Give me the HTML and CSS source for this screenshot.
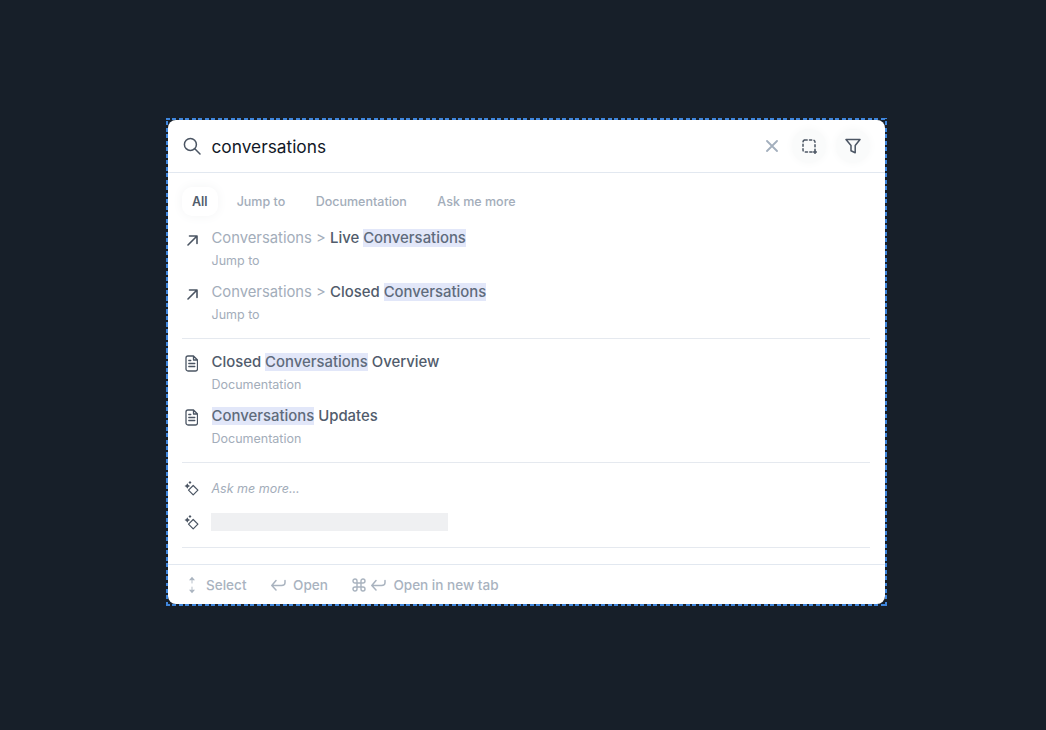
FILE: index.html
```html
<!DOCTYPE html>
<html lang="en">
<head>
<meta charset="utf-8">
<title>Search</title>
<link rel="stylesheet" href="styles.css">
</head>
<body>
<div class="frame">
<main class="panel">
  <header class="search">
    <svg class="ic-search" viewBox="0 0 18 18"><circle cx="7.4" cy="7.4" r="6"/><path d="M11.8 11.8 17 17"/></svg>
    <span class="query">conversations</span>
    <svg class="ic-clear" viewBox="0 0 12 12"><path d="M1 1 11 11M11 1 1 11"/></svg>
    <span class="round"><svg class="ic-btn" viewBox="0 0 16 16"><path class="dash" d="M4 2h8a2 2 0 0 1 2 2v8M11 14H4a2 2 0 0 1-2-2V4a2 2 0 0 1 2-2"/><path d="M14 12.500v3M12.500 14h3"/></svg></span>
    <span class="round"><svg class="ic-btn ic-filter" viewBox="0 0 16 16"><path d="M1 1.500h14l-4.800 6v7.300l-4.200-2v-5.300z"/></svg></span>
  </header>

  <nav class="tabs">
    <span class="tab active">All</span>
    <span class="tab">Jump to</span>
    <span class="tab">Documentation</span>
    <span class="tab">Ask me more</span>
  </nav>

  <section class="group first">
    <div class="item">
      <svg class="ic-item" viewBox="0 0 11 11"><path d="M1 10 10 1M2.500 1H10V8.500"/></svg>
      <div><p class="title"><span class="crumb">Conversations &gt; </span>Live <mark>Conversations</mark></p><p class="sub">Jump to</p></div>
    </div>
    <div class="item">
      <svg class="ic-item" viewBox="0 0 11 11"><path d="M1 10 10 1M2.500 1H10V8.500"/></svg>
      <div><p class="title"><span class="crumb">Conversations &gt; </span>Closed <mark>Conversations</mark></p><p class="sub">Jump to</p></div>
    </div>
  </section>

  <section class="group second">
    <div class="item">
      <svg class="ic-doc" viewBox="0 0 13.500 17"><path d="M1 3A2 2 0 0 1 3 1h5.500l4 4v9a2 2 0 0 1-2 2H3a2 2 0 0 1-2-2zM8.500 1v4h4M3.800 8.500h6M3.800 11.500h6M3.800 5.500h2"/></svg>
      <div><p class="title">Closed <mark>Conversations</mark> Overview</p><p class="sub">Documentation</p></div>
    </div>
    <div class="item">
      <svg class="ic-doc" viewBox="0 0 13.500 17"><path d="M1 3A2 2 0 0 1 3 1h5.500l4 4v9a2 2 0 0 1-2 2H3a2 2 0 0 1-2-2zM8.500 1v4h4M3.800 8.500h6M3.800 11.500h6M3.800 5.500h2"/></svg>
      <div><p class="title"><mark>Conversations</mark> Updates</p><p class="sub">Documentation</p></div>
    </div>
  </section>

  <section class="group ask">
    <div class="ask-row">
      <svg class="ic-spark" viewBox="0 0 15 15"><path class="fill" d="M3.300 2.200 4.300 4 6.100 5 4.300 6 3.300 7.800 2.300 6 .5 5 2.300 4z"/><path class="fill" d="M6 0 6.700 .8 7.500 1.500 6.700 2.200 6 3 5.300 2.200 4.500 1.500 5.300 .8z"/><path d="M9.200 4.500 13.900 9.200 9.200 13.900 4.500 9.200z"/></svg>
      <em class="ask-text">Ask me more...</em>
    </div>
    <div class="ask-row">
      <svg class="ic-spark" viewBox="0 0 15 15"><path class="fill" d="M3.300 2.200 4.300 4 6.100 5 4.300 6 3.300 7.800 2.300 6 .5 5 2.300 4z"/><path class="fill" d="M6 0 6.700 .8 7.500 1.500 6.700 2.200 6 3 5.300 2.200 4.500 1.500 5.300 .8z"/><path d="M9.200 4.500 13.900 9.200 9.200 13.900 4.500 9.200z"/></svg>
      <span class="skeleton"></span>
    </div>
  </section>

  <footer class="foot">
    <span class="hint">
      <svg class="ic-updown" viewBox="0 0 10 18"><path class="fill" d="M5 .8 8 4.300H2zM5 17.200 2 13.700h6z"/><path class="stem" d="M5 4v3M5 11v3"/></svg>
      <span>Select</span>
    </span>
    <span class="hint">
      <svg class="ic-enter" viewBox="0 0 15 12"><path d="M5 1.500.8 6.500 5 11M1 6.500h9.500c2.300 0 3.500-1.200 3.500-3V1.500"/></svg>
      <span>Open</span>
    </span>
    <span class="hint">
      <svg class="ic-cmd" viewBox="0 0 14 14"><path d="M5 5h4v4H5zM5 5H3a2 2 0 1 1 2-2zM9 5V3a2 2 0 1 1 2 2zM9 9h2a2 2 0 1 1-2 2zM5 9v2a2 2 0 1 1-2-2z"/></svg>
      <svg class="ic-enter" viewBox="0 0 15 12"><path d="M5 1.500.8 6.500 5 11M1 6.500h9.500c2.300 0 3.500-1.200 3.500-3V1.500"/></svg>
      <span>Open in new tab</span>
    </span>
  </footer>
</main>
</div>
</body>
</html>
```

FILE: styles.css
```css
* { box-sizing: border-box; }
html, body { margin: 0; height: 100%; }
body {
  background: #171f29;
  padding: 118px 159px 0 166px;
  font-family: Inter, "Liberation Sans", sans-serif;
  overflow: hidden;
}
p { margin: 0; }
svg { flex: none; fill: none; stroke-linecap: round; stroke-linejoin: round; }

.frame {
  width: 721px;
  height: 488px;
  padding: 2px;
  background:
    repeating-linear-gradient(90deg, #3f86dd 0 4px, transparent 4px 6.500px) top / 100% 2px no-repeat,
    repeating-linear-gradient(90deg, #3f86dd 0 4px, transparent 4px 6.500px) bottom / 100% 2px no-repeat,
    repeating-linear-gradient(0deg, #3f86dd 0 4px, transparent 4px 6.500px) left / 2px 100% no-repeat,
    repeating-linear-gradient(0deg, #3f86dd 0 4px, transparent 4px 6.500px) right / 2px 100% no-repeat;
}

.panel {
  width: 717px;
  height: 484px;
  background: #fff;
  border-radius: 8px;
  display: flex;
  flex-direction: column;
}

.search {
  height: 53px;
  flex: none;
  display: flex;
  align-items: center;
  padding: 0 15px 0 15px;
  border-bottom: 1px solid #e2e8f0;
}
.ic-search { width: 18px; height: 18px; stroke: #4b5563; stroke-width: 1.500; }
.query { margin-left: 10.500px; font-size: 17.300px; color: #111827; flex: 1; }
.ic-clear { width: 12px; height: 12px; stroke: #a3afbd; stroke-width: 1.800; margin-right: 4px; }
.round {
  width: 34px; height: 34px; border-radius: 50%;
  background: #fafbfb;
  box-shadow: 0 0 10px #f7f8f8;
  display: flex; align-items: center; justify-content: center;
  margin-left: 10px;
}
.ic-btn { width: 16px; height: 16px; stroke: #4b5563; stroke-width: 1.500; }
.ic-btn .dash { stroke-dasharray: 2.200 2.300; }
.ic-filter { stroke-width: 1.500; }

.tabs {
  display: flex;
  align-items: center;
  padding: 14px 0 0 14px;
  flex: none;
}
.tab {
  font-size: 12.500px;
  font-weight: 500;
  color: #a3adba;
  height: 29px;
  line-height: 29px;
  padding: 0 10px;
  margin-right: 10.500px;
  border-radius: 10px;
}
.tab.active { color: #515c6c; font-weight: 600; background: #fff; box-shadow: 0 0 12px #f3f4f5; margin-right: 9px; }

.group {
  margin: 0 15px 0 14px;
  border-bottom: 1px solid #e5e9ef;
  flex: none;
}
.group.first { padding: 11px 0 3px; }
.group.second { padding: 12px 0 3px; }
.item { display: flex; height: 54px; padding-top: 2px; }
.ic-item { width: 11px; height: 11px; stroke: #4b5563; stroke-width: 1.600; margin: 5.500px 13.500px 0 5px; }
.ic-doc { width: 13.500px; height: 17px; stroke: #4b5563; stroke-width: 1.300; margin: 2px 13.500px 0 2.500px; }
.title { font-size: 14.900px; font-weight: 500; line-height: 18px; color: #515c6c; }
.crumb { color: #a3adba; font-weight: 400; font-size: 14.800px; }
mark { background: #e2e7f9; color: #5f6b7c; }
.sub { font-size: 12.500px; line-height: 16px; color: #a3adba; margin-top: 6px; }

.ask { padding: 8px 0 0; height: 85px; }
.ask-row { display: flex; align-items: center; height: 34px; gap: 12px; padding-left: 2px; }
.ic-spark { width: 15px; height: 15px; stroke: #4b5563; stroke-width: 1.200; }
.ic-spark .fill { fill: #4b5563; stroke: none; }
.ask-text { font-size: 12.500px; color: #a3adba; margin-left: .5px; }
.skeleton { width: 237px; height: 18px; background: #eff0f2; display: block; }

.foot {
  margin-top: auto;
  height: 40px;
  flex: none;
  border-top: 1px solid #e2e8f0;
  display: flex;
  align-items: center;
  padding-left: 19px;
  gap: 24.500px;
  font-size: 13.550px;
  font-weight: 500;
  color: #a9b3bf;
}
.hint { display: flex; align-items: center; gap: 7px; }
.ic-updown { width: 10px; height: 18px; stroke: #a9b3bf; stroke-width: 1.200; margin-right: 2px; }
.ic-updown .fill { fill: #a9b3bf; stroke: none; }
.ic-updown .stem { stroke: #c3cad3; }
.ic-enter { width: 15px; height: 12px; stroke: #a9b3bf; stroke-width: 1.500; }
.ic-cmd { width: 14px; height: 14px; stroke: #a9b3bf; stroke-width: 1.400; margin-right: -2px; }
```
